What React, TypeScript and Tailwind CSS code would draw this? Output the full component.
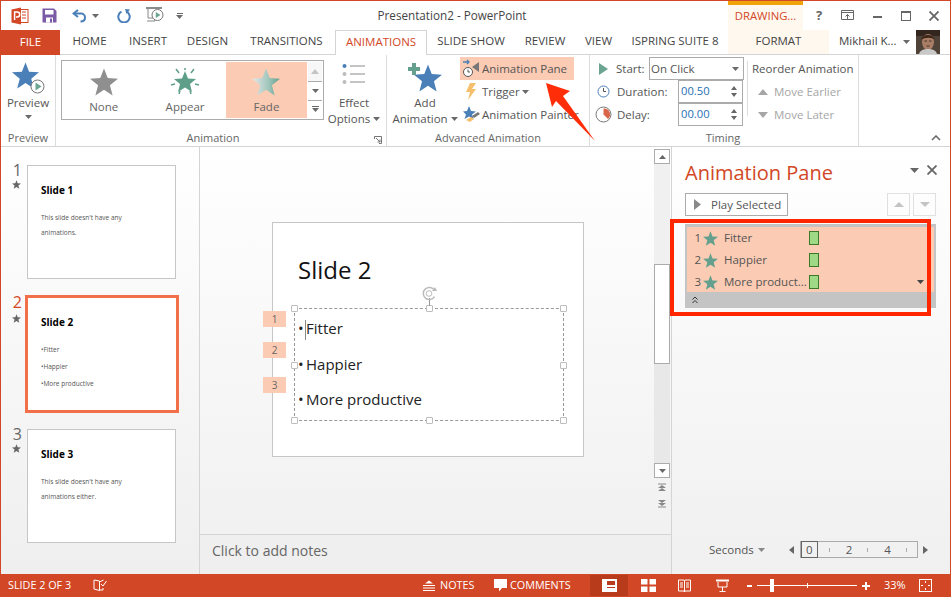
const font = "[font-family:'Open_Sans',sans-serif]";

function Star({ size, fill, className }: { size: number; fill: string; className?: string }) {
  return (
    <svg width={size} height={size} viewBox="0 0 24 24" className={className}>
      <polygon points="12,0.5 15.2,8.6 24,9.2 17.1,14.8 19.4,23.5 12,18.6 4.6,23.5 6.9,14.8 0,9.2 8.8,8.6" fill={fill} />
    </svg>
  );
}

function Caret({ color = "#6a6a6a" }: { color?: string }) {
  return (
    <svg width="7" height="4" viewBox="0 0 7 4" className="shrink-0">
      <polygon points="0,0 7,0 3.5,4" fill={color} />
    </svg>
  );
}

function TitleIcons() {
  return (
    <div className="flex items-center">
      <svg width="18" height="18" viewBox="0 0 18 18" className="ml-[10px]">
        <rect x="7" y="2.5" width="10" height="13" fill="#fff" stroke="#d24726" />
        <path d="M11 5h4M11 8h4M11 11h4" stroke="#d24726" />
        <path d="M0.5 2.5 L10 0.5 V17.5 L0.5 15.5Z" fill="#d24726" />
        <path d="M3.6 13V5h2.6a2.3 2.3 0 0 1 0 5H5" fill="none" stroke="#fff" strokeWidth="1.5" />
      </svg>
      <svg width="15" height="15" viewBox="0 0 15 15" className="ml-[13px]">
        <path d="M0.5 0.5H12L14.5 3V14.5H0.5Z" fill="#7c5ba6" />
        <rect x="3" y="2" width="8.5" height="4.5" fill="#fff" />
        <rect x="4" y="9.5" width="7" height="5" fill="#fff" />
        <rect x="8" y="10.5" width="2" height="4" fill="#7c5ba6" />
      </svg>
      <svg width="15" height="14" viewBox="0 0 15 14" className="ml-[15px]">
        <path d="M6 1 L1.5 4.5 L6 8" fill="none" stroke="#4a7fb8" strokeWidth="2" />
        <path d="M2 4.5H9a4 4 0 0 1 4 4c0 2.5-2 4-4.5 4" fill="none" stroke="#4a7fb8" strokeWidth="2" />
      </svg>
      <span className="ml-[5px]"><Caret /></span>
      <svg width="14" height="14" viewBox="0 0 14 14" className="ml-[18px]">
        <path d="M4.5 2.6a5.7 5.7 0 1 0 5 0" fill="none" stroke="#4a7fb8" strokeWidth="2" />
        <polygon points="8,0 13,0.5 9.5,5" fill="#4a7fb8" />
      </svg>
      <svg width="18" height="17" viewBox="0 0 18 17" className="ml-[15px]">
        <path d="M0 1h16" stroke="#666" strokeWidth="1.5" />
        <path d="M2 1v10h5M9 14h-8M9 11v3" fill="none" stroke="#888" />
        <circle cx="11.5" cy="8" r="5.5" fill="#fff" stroke="#777" />
        <polygon points="9.8,5 14.5,8 9.8,11" fill="#6ba592" />
      </svg>
      <span className="ml-[12px] flex flex-col items-center gap-[1px]">
        <span className="h-px w-[6px] bg-[#666]" />
        <Caret />
      </span>
    </div>
  );
}

function TitleBar() {
  return (
    <div className="flex h-[29px] shrink-0">
      <div className="w-[363px] pt-[1px]">
        <div className="flex h-[27px] items-center"><TitleIcons /></div>
      </div>
      <div className="w-[176px] pt-[6px] text-center text-[11.7px] leading-[16px] text-[#444]">Presentation2 - PowerPoint</div>
      <div className="w-[188px]" />
      <div className="h-[29px] w-[75px] border-t-[4px] border-[#f0a30a] bg-[#fff8ef] pt-[3px] text-center text-[11.3px] leading-[16px] text-[#d24726]">DRAWING...</div>
      <div className="flex flex-1 items-center">
        <span className="ml-[10px] w-[12px] text-center text-[13px] font-bold text-[#666]">?</span>
        <svg width="13" height="11" viewBox="0 0 13 11" className="ml-[16px]">
          <path d="M0.5 0.5h12v9h-12zM0.5 2.5h12" fill="none" stroke="#666" />
          <path d="M6.5 9V4.5M4.5 6.5l2-2 2 2" fill="none" stroke="#666" />
        </svg>
        <span className="ml-[19px] mt-[3px] h-[2px] w-[9px] bg-[#666]" />
        <span className="ml-[19px] h-[10px] w-[10px] border border-t-2 border-[#666]" />
        <svg width="10" height="10" viewBox="0 0 10 10" className="ml-[18px]">
          <path d="M0.5 0.5l9 9M9.5 0.5l-9 9" stroke="#666" strokeWidth="1.8" />
        </svg>
      </div>
    </div>
  );
}

const tabs: [string, string][] = [
  ["HOME", "w-[59px]"],
  ["INSERT", "w-[58px]"],
  ["DESIGN", "w-[61px]"],
  ["TRANSITIONS", "w-[97px]"],
];
const tabsAfter: [string, string][] = [
  ["SLIDE SHOW", "w-[88px]"],
  ["REVIEW", "w-[60px]"],
  ["VIEW", "w-[47px]"],
  ["ISPRING SUITE 8", "w-[106px]"],
];

function TabBar() {
  return (
    <div className="flex h-[25px] shrink-0 border-b border-[#d4d4d4] text-[11.5px] text-[#444]">
      <div className="flex h-[25px] w-[59px] items-center justify-center bg-[#d24726] pb-[2px] text-white">FILE</div>
      {tabs.map(([label, w]) => (
        <div key={label} className={`flex items-center justify-center pb-[2px] ${w}`}>{label}</div>
      ))}
      <div className="z-10 flex h-[25px] w-[92px] items-center justify-center border-x border-t border-[#d4d4d4] bg-white pb-[2px] text-[#d24726]">ANIMATIONS</div>
      {tabsAfter.map(([label, w]) => (
        <div key={label} className={`flex items-center justify-center pb-[2px] ${w}`}>{label}</div>
      ))}
      <div className="flex h-[24px] w-[101px] items-center justify-center bg-[#fff8ef] pb-[2px]">FORMAT</div>
      <div className="flex flex-1 items-center pl-[10px]">
        <span className="w-[58px] whitespace-nowrap pb-[2px]">Mikhail K...</span>
        <span className="ml-[6px]"><Caret /></span>
        <svg width="24" height="24" viewBox="0 0 24 24" className="-mt-[1px] ml-[6px]">
          <rect width="24" height="24" fill="#4f4238" />
          <rect y="0" width="24" height="6" fill="#33261f" />
          <ellipse cx="12" cy="12" rx="6" ry="8" fill="#a87e66" />
          <path d="M5 10c1-6 12-7 14 0-3-3-10-3-14 0Z" fill="#3f2618" />
          <path d="M8.5 11h2.5M13 11h2.5M10.5 16h3" stroke="#4a3024" />
          <path d="M3 24c1-4 5-5 9-5s8 1 9 5Z" fill="#c8c8c8" />
        </svg>
      </div>
    </div>
  );
}

function GalleryItem({ label, active, children }: { label: string; active?: boolean; children: React.ReactNode }) {
  return (
    <div className={`flex h-[56px] w-[82px] flex-col items-center pt-[6px] ${active ? "bg-[#fccbb3]" : ""}`}>
      {children}
      <span className="mt-[3px] text-[11.5px] leading-[16px] text-[#666]">{label}</span>
    </div>
  );
}

function GroupLabel({ children }: { children: React.ReactNode }) {
  return <div className="h-[16px] text-center text-[11px] leading-[15px] text-[#666]">{children}</div>;
}

function PreviewGroup() {
  return (
    <div className="flex w-[55px] flex-col border-r border-[#dcdcdc]">
      <div className="relative flex h-[75px] flex-col items-center pt-[7px]">
        <div className="relative h-[29px] w-[30px] -translate-x-[1px]">
          <Star size={27} fill="#4a7fb8" />
          <svg width="15" height="15" viewBox="0 0 15 15" className="absolute -bottom-[3px] right-[-3px]">
            <circle cx="7.5" cy="7.5" r="6.5" fill="#fff" stroke="#777" />
            <polygon points="5.5,3.5 11.5,7.5 5.5,11.5" fill="#6ba592" />
          </svg>
        </div>
        <span className="mt-[4px] text-[11.5px] leading-[16px] text-[#555]">Preview</span>
        <span className="mt-[4px]"><Caret /></span>
      </div>
      <GroupLabel>Preview</GroupLabel>
    </div>
  );
}

function AnimationGroup() {
  return (
    <div className="flex w-[331px] flex-col border-r border-[#dcdcdc]">
      <div className="flex h-[75px] pl-[5px] pt-[5px]">
        <div className="flex h-[60px] w-[263px] border border-[#ababab] bg-white p-[1px]">
          <GalleryItem label="None"><Star size={28} fill="#8f8f8f" /></GalleryItem>
          <GalleryItem label="Appear">
            <svg width="30" height="28" viewBox="0 0 30 28">
              <polygon points="15,3 18,10.5 26,11 20,16 22,24 15,19.5 8,24 10,16 4,11 12,10.5" fill="#5f9f8a" />
              <path d="M6 1l3 4M24 1l-3 4M1 17l4-1M29 17l-4-1M9 26l1-3M21 26l-1-3M15 0v2" stroke="#5f9f8a" strokeWidth="1.5" />
            </svg>
          </GalleryItem>
          <GalleryItem label="Fade" active>
            <svg width="28" height="28" viewBox="0 0 24 24">
              <defs>
                <linearGradient id="fadeStar" x1="0" x2="1" y1="0" y2="0">
                  <stop offset="0" stopColor="#e8e8e8" />
                  <stop offset="0.6" stopColor="#9fc5bb" />
                  <stop offset="1" stopColor="#5f9f8a" />
                </linearGradient>
              </defs>
              <polygon points="12,0.5 15.2,8.6 24,9.2 17.1,14.8 19.4,23.5 12,18.6 4.6,23.5 6.9,14.8 0,9.2 8.8,8.6" fill="url(#fadeStar)" />
            </svg>
          </GalleryItem>
          <div className="ml-[1px] flex w-[14px] flex-col">
            <div className="flex h-[20px] items-center justify-center bg-[#f7f7f7] text-[#c4c4c4]">
              <svg width="8" height="5" viewBox="0 0 8 5"><polygon points="0,5 8,5 4,0" fill="#c4c4c4" /></svg>
            </div>
            <div className="flex h-[20px] items-center justify-center border-y border-[#ababab]"><Caret /></div>
            <div className="flex h-[18px] flex-col items-center justify-center gap-[1px]">
              <span className="h-px w-[7px] bg-[#666]" />
              <Caret />
            </div>
          </div>
        </div>
        <div className="ml-[1px] flex w-[58px] flex-col items-center">
          <svg width="24" height="22" viewBox="0 0 24 22" className="mt-[2px]">
            <circle cx="2.5" cy="4" r="2" fill="#4a7fb8" />
            <circle cx="2.5" cy="12" r="2" fill="#bdbdbd" />
            <circle cx="2.5" cy="20" r="2" fill="#bdbdbd" />
            <path d="M8 4h15M8 12h15M8 20h15" stroke="#8a8a8a" />
          </svg>
          <span className="mt-[11px] text-[11.5px] leading-[16px] text-[#555]">Effect</span>
          <span className="flex items-center gap-[3px] text-[11.5px] leading-[16px] text-[#555]">Options <Caret /></span>
        </div>
      </div>
      <div className="relative">
        <GroupLabel><span className="-ml-[16px]">Animation</span></GroupLabel>
        <svg width="8" height="8" viewBox="0 0 8 8" className="absolute bottom-[2px] right-[4px]">
          <path d="M0.5 3V0.5H7.5V7.5H5M2 2l4 4M6 3.5V6H3.5" fill="none" stroke="#777" />
        </svg>
      </div>
    </div>
  );
}

function AdvancedGroup() {
  return (
    <div className="flex w-[203px] flex-col border-r border-[#dcdcdc]">
      <div className="flex h-[75px]">
        <div className="flex w-[73px] flex-col items-center pl-[3px] pt-[7px]">
          <div className="relative h-[28px] w-[30px]">
            <Star size={28} fill="#4a7fb8" className="absolute left-[4px] top-[2px]" />
            <span className="absolute left-[-2px] top-[5px] h-[4px] w-[12px] bg-[#64a08d]" />
            <span className="absolute left-[2px] top-[1px] h-[12px] w-[4px] bg-[#64a08d]" />
          </div>
          <span className="mt-[5px] text-[11.5px] leading-[16px] text-[#555]">Add</span>
          <span className="flex items-center gap-[3px] text-[11.5px] leading-[16px] text-[#555]">Animation <Caret /></span>
        </div>
        <div className="flex flex-col pt-[2px] text-[11.5px] text-[#555]">
          <div className="flex h-[23px] w-[114px] items-center bg-[#fccbb3] pl-[2px]">
            <svg width="18" height="19" viewBox="0 0 18 19">
              <path d="M1 3h6M5 1l2 2-2 2" fill="none" stroke="#4a7fb8" strokeWidth="1.3" />
              <circle cx="6" cy="13" r="4.5" fill="#fff" stroke="#555" />
              <path d="M6 10.5V13h2" fill="none" stroke="#555" />
              <polygon points="17,3 17,13 10,8" fill="#777" />
            </svg>
            <span className="ml-[2px] whitespace-nowrap">Animation Pane</span>
          </div>
          <div className="flex h-[23px] items-center pl-[5px]">
            <svg width="12" height="17" viewBox="0 0 12 17"><polygon points="5,0 11,0 7,6 11,6 3,17 5,9 1,9" fill="#f5bf6b" /></svg>
            <span className="ml-[5px]">Trigger</span>
            <span className="ml-[2px]"><Caret /></span>
          </div>
          <div className="flex h-[23px] items-center pl-[3px]">
            <svg width="17" height="17" viewBox="0 0 17 17">
              <polygon points="6,0 8,5 13,5.5 9,8.5 10.5,13 6,10.5 1.5,13 3,8.5 0,5.5 4,5" fill="#4a7fb8" />
              <path d="M3 14l5-3 3 2-4 3Z" fill="#f5bf6b" />
              <path d="M9 10l6-4 2 2-6 4Z" fill="#777" />
            </svg>
            <span className="ml-[2px] whitespace-nowrap">Animation Painter</span>
          </div>
        </div>
      </div>
      <GroupLabel>Advanced Animation</GroupLabel>
    </div>
  );
}

function Spinner({ value }: { value: string }) {
  return (
    <div className="flex h-[23px] w-[65px] items-center justify-between border border-[#ababab] bg-white pl-[2px] pr-[5px] text-[11.2px] text-[#1f6fb5]">
      <span>{value}</span>
      <span className="flex flex-col gap-[3px]">
        <svg width="6" height="4" viewBox="0 0 6 4" className="block"><polygon points="0,4 6,4 3,0" fill="#666" /></svg>
        <svg width="6" height="4" viewBox="0 0 6 4" className="block"><polygon points="0,0 6,0 3,4" fill="#666" /></svg>
      </span>
    </div>
  );
}

function TimingGroup() {
  return (
    <div className="flex w-[269px] flex-col border-r border-[#dcdcdc]">
      <div className="flex h-[75px] text-[11.5px] text-[#555]">
        <div className="flex w-[157px] flex-col pl-[5px] pt-[2px]">
          <div className="flex h-[23px] items-center">
            <svg width="12" height="14" viewBox="0 0 12 14" className="ml-[3px]"><polygon points="1,1 10,7 1,13" fill="#6ba592" /></svg>
            <span className="ml-[6px] w-[33px]">Start:</span>
            <div className="flex h-[23px] w-[95px] items-center justify-between border border-[#ababab] bg-white pl-[1px] pr-[4px]">
              On Click <Caret />
            </div>
          </div>
          <div className="flex h-[23px] items-center">
            <svg width="13" height="13" viewBox="0 0 13 13" className="ml-[2px]">
              <circle cx="6.5" cy="6.5" r="5.5" fill="#fff" stroke="#4a7fb8" />
              <path d="M6.5 3v3.5H9" fill="none" stroke="#555" />
            </svg>
            <span className="ml-[7px] w-[61px]">Duration:</span>
            <Spinner value="00.50" />
          </div>
          <div className="flex h-[23px] items-center">
            <svg width="17" height="17" viewBox="0 0 17 17">
              <circle cx="8.5" cy="8.5" r="7.5" fill="#fff" stroke="#777" />
              <path d="M8.5 8.5V2.5A6 6 0 0 1 13 13Z" fill="#d9664a" />
            </svg>
            <span className="ml-[5px] w-[61px]">Delay:</span>
            <Spinner value="00.00" />
          </div>
        </div>
        <div className="mt-[6px] h-[55px] w-px bg-[#dcdcdc]" />
        <div className="flex flex-col pl-[4px] pt-[2px]">
          <div className="flex h-[23px] items-center whitespace-nowrap">Reorder Animation</div>
          <div className="flex h-[23px] items-center pl-[6px] text-[#a6a6a6]">
            <svg width="10" height="6" viewBox="0 0 10 6"><polygon points="0,6 10,6 5,0" fill="#a6a6a6" /></svg>
            <span className="ml-[6px]">Move Earlier</span>
          </div>
          <div className="flex h-[23px] items-center pl-[6px] text-[#a6a6a6]">
            <svg width="10" height="6" viewBox="0 0 10 6"><polygon points="0,0 10,0 5,6" fill="#a6a6a6" /></svg>
            <span className="ml-[6px]">Move Later</span>
          </div>
        </div>
      </div>
      <GroupLabel><span className="-ml-[2px]">Timing</span></GroupLabel>
    </div>
  );
}

function Ribbon() {
  return (
    <div className="flex h-[92px] shrink-0 border-b border-[#d4d4d4] bg-white">
      <PreviewGroup />
      <AnimationGroup />
      <AdvancedGroup />
      <TimingGroup />
      <div className="flex flex-1 items-end justify-end pb-[5px] pr-[9px]">
        <svg width="10" height="6" viewBox="0 0 10 6"><path d="M1 5l4-4 4 4" fill="none" stroke="#666" strokeWidth="1.5" /></svg>
      </div>
    </div>
  );
}

function Thumb({ num, title, lines, active, gap }: { num: number; title: string; lines: string[]; active?: boolean; gap: string }) {
  return (
    <div className={`flex ${gap}`}>
      <div className={`flex w-[25px] flex-col items-end pr-[5px] ${active ? "-mt-[2px]" : "-mt-[4px]"}`}>
        <span className={`text-[16px] leading-[18px] ${active ? "text-[#d24726]" : "text-[#666]"}`}>{num}</span>
        <Star size={9} fill="#666" className={`-translate-x-[1px] ${active ? "mt-[3px]" : "mt-[1px]"}`} />
      </div>
      <div className={active ? "-ml-[2px] h-[118px] w-[154px] border-[3px] border-[#f27049] bg-white pl-[13px] pt-[17px]" : "h-[114px] w-[149px] border border-[#c6c6c6] bg-white pl-[13px] pt-[17px]"}>
        <div className="text-[10px] font-bold leading-[14px] text-black">{title}</div>
        <div className={active ? "mt-[12px] text-[6.5px] leading-[17px] text-[#555]" : "mt-[13px] text-[6.5px] leading-[15px] text-[#555]"}>
          {lines.map((l) => <div key={l}>{l}</div>)}
        </div>
      </div>
    </div>
  );
}

function Thumbs() {
  return (
    <div className="flex w-[199px] shrink-0 flex-col border-r border-[#d4d4d4] bg-gradient-to-b from-white to-[#efefef] pl-[1px] pt-[18px]">
      <Thumb num={1} title="Slide 1" lines={["This slide doesn't have any", "animations."]} gap="mb-[16px]" />
      <Thumb num={2} title="Slide 2" lines={["•Fitter", "•Happier", "•More productive"]} active gap="mb-[16px]" />
      <Thumb num={3} title="Slide 3" lines={["This slide doesn't have any", "animations either."]} gap="" />
    </div>
  );
}

function Handle({ className }: { className: string }) {
  return <span className={`absolute h-[7px] w-[7px] rounded-[1px] border-[1.5px] border-[#bdbdbd] bg-white ${className}`} />;
}

function SlideCanvas() {
  return (
    <div className="relative ml-[72px] mt-[75px] h-[235px] w-[312px] border border-[#c6c6c6] bg-white pl-[25px] pt-[30px] text-[#222]">
      <div className="text-[24px] leading-[34px] text-[#111]">Slide 2</div>
      <div className="relative -ml-[4px] mt-[21px] h-[113px] w-[270px] border border-dashed border-[#999] pl-[3px] text-[15px] leading-[35.5px]">
        <div className="pt-[2px]">
          <div className="relative flex"><span className="w-[8px]">•</span>Fitter<span className="absolute left-[7px] top-[9px] h-[20px] w-px bg-[#888]" /></div>
          <div className="flex"><span className="w-[8px]">•</span>Happier</div>
          <div className="flex"><span className="w-[8px]">•</span>More productive</div>
        </div>
        <Handle className="-left-[4px] -top-[4px]" />
        <Handle className="left-[131px] -top-[4px]" />
        <Handle className="-right-[4px] -top-[4px]" />
        <Handle className="-left-[4px] top-[53px]" />
        <Handle className="-right-[4px] top-[53px]" />
        <Handle className="-left-[4px] -bottom-[4px]" />
        <Handle className="left-[131px] -bottom-[4px]" />
        <Handle className="-right-[4px] -bottom-[4px]" />
        <span className="absolute left-[134px] -top-[11px] h-[8px] w-px bg-[#999]" />
        <svg width="15" height="15" viewBox="0 0 15 15" className="absolute -top-[23px] left-[127px]">
          <path d="M12.5 4.5a6 6 0 1 0 0 6" fill="none" stroke="#bbb" strokeWidth="1.5" />
          <circle cx="7" cy="7.5" r="2.8" fill="none" stroke="#bbb" />
          <polygon points="10,5 15,5 13,1" fill="#bbb" />
        </svg>
      </div>
      {[["1", "top-[88px]"], ["2", "top-[119px]"], ["3", "top-[154px]"]].map(([n, top]) => (
        <span key={n} className={`absolute -left-[10px] flex h-[16px] w-[23px] items-center justify-center bg-[#fccbb3] text-[10px] text-[#666] ${top}`}>{n}</span>
      ))}
    </div>
  );
}

function Scrollbar() {
  return (
    <div className="flex w-[16px] shrink-0 flex-col pt-[2px]">
      <div className="flex h-[15px] items-center justify-center border border-[#ababab] bg-white">
        <svg width="7" height="4" viewBox="0 0 7 4"><polygon points="0,4 7,4 3.5,0" fill="#666" /></svg>
      </div>
      <div className="h-[100px] bg-[#f0f0f0]" />
      <div className="h-[100px] border border-[#ababab] bg-white" />
      <div className="h-[99px] bg-[#e8e8e8]" />
      <div className="flex h-[15px] items-center justify-center border border-[#ababab] bg-white"><Caret /></div>
      <svg width="8" height="8" viewBox="0 0 8 8" className="ml-[4px] mt-[5px]">
        <path d="M0 1h8" stroke="#888" /><polygon points="0,5 8,5 4,2" fill="#888" /><polygon points="0,8 8,8 4,5" fill="#888" />
      </svg>
      <svg width="8" height="8" viewBox="0 0 8 8" className="ml-[4px] mt-[9px]">
        <path d="M0 7h8" stroke="#888" /><polygon points="0,0 8,0 4,3" fill="#888" /><polygon points="0,3 8,3 4,6" fill="#888" />
      </svg>
    </div>
  );
}

function EditorArea() {
  return (
    <div className="flex w-[472px] shrink-0 flex-col border-r border-[#d4d4d4]">
      <div className="flex flex-1 bg-gradient-to-b from-white to-[#f1f1f1] pr-[1px]">
        <div className="flex-1"><SlideCanvas /></div>
        <Scrollbar />
      </div>
      <div className="h-[40px] border-t border-[#d4d4d4] bg-[#efefef] pl-[12px] pt-[6px] text-[14px] leading-[20px] text-[#666]">Click to add notes</div>
    </div>
  );
}

function PaneRow({ num, label }: { num: number; label: string }) {
  return (
    <div className="flex h-[22px] items-center text-[11.5px] text-[#555]">
      <span className="w-[13px] text-right">{num}</span>
      <Star size={15} fill="#64a08d" className="ml-[2px]" />
      <span className="ml-[6px] w-[85px] whitespace-nowrap">{label}</span>
      <span className="h-[14px] w-[10px] border border-[#3c7a2a] bg-[#a0d986]" />
    </div>
  );
}

function AnimationPane() {
  return (
    <div className="flex flex-1 flex-col bg-gradient-to-b from-white to-[#f0f0f0] pl-[13px] pr-[14px]">
      <div className="flex h-[46px] items-start justify-between pt-[12px]">
        <span className="text-[20px] leading-[28px] text-[#d24726]">Animation Pane</span>
        <div className="-mr-[1px] flex items-center gap-[8px] pt-[6px]">
          <svg width="9" height="5" viewBox="0 0 9 5"><polygon points="0,0 9,0 4.5,5" fill="#666" /></svg>
          <svg width="10" height="10" viewBox="0 0 10 10"><path d="M0.5 0.5l9 9M9.5 0.5l-9 9" stroke="#666" strokeWidth="1.8" /></svg>
        </div>
      </div>
      <div className="flex justify-between">
        <div className="flex h-[23px] w-[103px] items-center border border-[#ababab] bg-white pl-[8px] text-[11.5px] text-[#555]">
          <svg width="7" height="11" viewBox="0 0 7 11"><polygon points="0,0 7,5.5 0,11" fill="#8a8a8a" /></svg>
          <span className="ml-[10px] whitespace-nowrap">Play Selected</span>
        </div>
        <div className="flex gap-[3px]">
          <div className="flex h-[23px] w-[23px] items-center justify-center border border-[#e0e0e0]">
            <svg width="10" height="5" viewBox="0 0 10 5"><polygon points="0,5 10,5 5,0" fill="#c4c4c4" /></svg>
          </div>
          <div className="flex h-[23px] w-[23px] items-center justify-center border border-[#e0e0e0]">
            <svg width="10" height="5" viewBox="0 0 10 5"><polygon points="0,0 10,0 5,5" fill="#c4c4c4" /></svg>
          </div>
        </div>
      </div>
      <div className="mt-[8px] bg-[#c4c4c4] pt-[3px]">
        <div className="relative mx-[2px] h-[65px] bg-[#fccbb3] pl-[1px]">
          <PaneRow num={1} label="Fitter" />
          <PaneRow num={2} label="Happier" />
          <PaneRow num={3} label="More product..." />
          <span className="absolute bottom-[8px] right-[10px]"><Caret color="#444" /></span>
        </div>
        <div className="flex h-[16px] items-center pl-[7px]">
          <svg width="6" height="8" viewBox="0 0 6 8"><path d="M0.5 3.5L3 1l2.5 2.5M0.5 7L3 4.5 5.5 7" fill="none" stroke="#333" /></svg>
        </div>
      </div>
      <div className="mt-auto mb-[16px] flex h-[17px] items-center pl-[24px] text-[11.5px] text-[#555]">
        <span>Seconds</span>
        <span className="ml-[4px]"><Caret color="#888" /></span>
        <svg width="5" height="8" viewBox="0 0 5 8" className="ml-[24px]"><polygon points="5,0 5,8 0,4" fill="#666" /></svg>
        <div className="ml-[6px] flex h-[17px] w-[118px] items-center border border-[#ababab] text-[11.5px]">
          <span className="flex h-[17px] w-[17px] items-center justify-center border border-[#666]">0</span>
          <span className="ml-[11px] h-[4px] w-px bg-[#aaa]" />
          <span className="ml-[16px]">2</span>
          <span className="ml-[15px] h-[4px] w-px bg-[#aaa]" />
          <span className="ml-[16px]">4</span>
          <span className="ml-[15px] h-[4px] w-px bg-[#aaa]" />
        </div>
        <svg width="5" height="8" viewBox="0 0 5 8" className="ml-[5px]"><polygon points="0,0 0,8 5,4" fill="#666" /></svg>
      </div>
    </div>
  );
}

function StatusBar() {
  return (
    <div className="flex h-[23px] shrink-0 items-center bg-[#d24726] text-[10.8px] text-white">
      <span className="ml-[7px] w-[85px]">SLIDE 2 OF 3</span>
      <svg width="14" height="13" viewBox="0 0 14 13">
        <path d="M6.5 2L1 1v9l5.5 1.5V2zM6.5 2v9.5M6.5 3l4-2" fill="none" stroke="#fff" />
        <path d="M8 5l2 2 3.5-5M10 9v2H7" fill="none" stroke="#fff" />
      </svg>
      <svg width="12" height="12" viewBox="0 0 12 12" className="ml-[316px]">
        <path d="M0 5.5h12M0 8h12M0 10.5h12" stroke="#fff" />
        <polygon points="2,3.5 10,3.5 6,0.5" fill="#fff" />
      </svg>
      <span className="ml-[5px] w-[54px]">NOTES</span>
      <svg width="13" height="13" viewBox="0 0 13 13"><path d="M0 0h13v9H8l-3 3.5V9H0z" fill="#fff" /></svg>
      <span className="ml-[3px] w-[80px] whitespace-nowrap">COMMENTS</span>
      <div className="flex h-[21px] w-[38px] items-center justify-center bg-[#b83b1c]">
        <svg width="15" height="13" viewBox="0 0 15 13">
          <rect width="15" height="13" fill="#fff" />
          <rect x="5" y="2" width="8" height="4" fill="#b83b1c" />
          <rect x="5" y="8" width="8" height="1" fill="#b83b1c" />
        </svg>
      </div>
      <svg width="15" height="13" viewBox="0 0 15 13" className="ml-[13px]">
        <path d="M0 0h6.5v5.5H0zM8.5 0H15v5.5H8.5zM0 7.5h6.5V13H0zM8.5 7.5H15V13H8.5z" fill="#fff" />
      </svg>
      <svg width="13" height="13" viewBox="0 0 13 13" className="ml-[22px]">
        <path d="M0.5 1h5.5l0.5 1 0.5-1h5.5v11H7l-0.5 1-0.5-1H0.5zM6.5 2v10M2 4h3M2 6h3M2 8h3M8 4h3M8 6h3M8 8h3" fill="none" stroke="#fff" />
      </svg>
      <svg width="13" height="13" viewBox="0 0 13 13" className="ml-[25px]">
        <path d="M0 0.5h13v2H0z" fill="#fff" />
        <path d="M2 3v5h9V3M6.5 8v4M3.5 12.5h6" fill="none" stroke="#fff" />
      </svg>
      <span className="ml-[18px] h-[2px] w-[5px] bg-white" />
      <div className="relative ml-[5px] flex h-[13px] w-[100px] items-center">
        <span className="h-px w-full bg-white" />
        <span className="absolute left-[50px] h-[5px] w-px bg-white" />
        <span className="absolute left-[13px] h-[13px] w-[4px] bg-white" />
      </div>
      <svg width="8" height="8" viewBox="0 0 8 8" className="ml-[5px]"><path d="M0 3h8v2H0zM3 0h2v8H3z" fill="#fff" /></svg>
      <span className="ml-[14px] w-[24px] text-[11px]">33%</span>
      <svg width="13" height="13" viewBox="0 0 13 13" className="ml-[11px]">
        <rect x="0.5" y="0.5" width="12" height="12" fill="none" stroke="#fff" />
        <path d="M6.5 2v2M6.5 9v2M2 6.5h2M9 6.5h2" stroke="#fff" />
      </svg>
    </div>
  );
}

export default function App() {
  return (
    <div className={`relative flex h-[597px] w-[951px] flex-col overflow-hidden border-x border-t border-[#d24726] bg-white ${font}`}>
      <TitleBar />
      <TabBar />
      <Ribbon />
      <div className="flex min-h-0 flex-1">
        <Thumbs />
        <EditorArea />
        <AnimationPane />
      </div>
      <StatusBar />

      {/* callouts on top of the screenshot */}
      <svg width="60" height="64" viewBox="0 0 60 64" className="absolute left-[539px] top-[79px]">
        <polygon points="6,3 30,11 23,16 55,61 16,21 12,27" fill="#ff2d08" />
      </svg>
      <div className="absolute left-[669px] top-[218px] h-[97px] w-[261px] border-[4px] border-[#ff2600]" />
    </div>
  );
}
